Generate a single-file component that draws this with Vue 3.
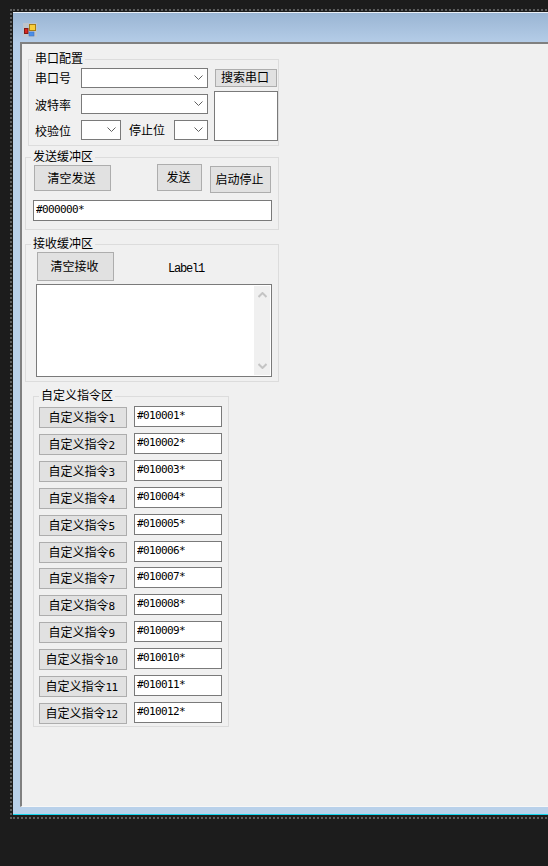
<script setup>
const cmds = [
  { n: 1, v: "#010001*" },
  { n: 2, v: "#010002*" },
  { n: 3, v: "#010003*" },
  { n: 4, v: "#010004*" },
  { n: 5, v: "#010005*" },
  { n: 6, v: "#010006*" },
  { n: 7, v: "#010007*" },
  { n: 8, v: "#010008*" },
  { n: 9, v: "#010009*" },
  { n: 10, v: "#010010*" },
  { n: 11, v: "#010011*" },
  { n: 12, v: "#010012*" },
];
</script>

<template>
  <div class="stage">
    <div class="frame">
      <div class="window">
        <div class="titlebar">
          <svg class="app-icon" width="14" height="14" viewBox="0 0 14 14">
            <rect x="0" y="0" width="14" height="14" fill="#c3c5c9" opacity="0.8" />
            <rect x="1.5" y="5.5" width="3.5" height="5" fill="#d8261f" stroke="#7f1a16" />
            <rect x="6.5" y="1.5" width="6" height="6" fill="#f8cd3a" stroke="#a87d12" />
            <rect x="6" y="9" width="5" height="4" fill="#4a8ee8" stroke="#3f74c4" stroke-width="0.6" />
          </svg>
        </div>
        <div class="client">
          <div class="group g-port">
            <span class="legend">串口配置</span>
            <div class="port-left">
              <div class="port-row">
                <span class="lbl up">串口号</span>
                <div class="combo w127">
                  <svg width="9" height="5" viewBox="0 0 9 5"><path d="M0.5 0.5L4.5 4.5L8.5 0.5" fill="none" stroke="#606060" /></svg>
                </div>
              </div>
              <div class="port-row">
                <span class="lbl">波特率</span>
                <div class="combo w127">
                  <svg width="9" height="5" viewBox="0 0 9 5"><path d="M0.5 0.5L4.5 4.5L8.5 0.5" fill="none" stroke="#606060" /></svg>
                </div>
              </div>
              <div class="port-row">
                <span class="lbl">校验位</span>
                <div class="combo w40">
                  <svg width="9" height="5" viewBox="0 0 9 5"><path d="M0.5 0.5L4.5 4.5L8.5 0.5" fill="none" stroke="#606060" /></svg>
                </div>
                <span class="lbl stop up">停止位</span>
                <div class="combo w34">
                  <svg width="9" height="5" viewBox="0 0 9 5"><path d="M0.5 0.5L4.5 4.5L8.5 0.5" fill="none" stroke="#606060" /></svg>
                </div>
              </div>
            </div>
            <div class="port-right">
              <button class="btn search">搜索串口</button>
              <div class="listbox"></div>
            </div>
          </div>

          <div class="group g-send">
            <span class="legend">发送缓冲区</span>
            <div class="send-btns">
              <button class="btn clear-send">清空发送</button>
              <button class="btn send">发送</button>
              <button class="btn start-stop">启动停止</button>
            </div>
            <input class="field send-field" value="#000000*" readonly />
          </div>

          <div class="group g-recv">
            <span class="legend">接收缓冲区</span>
            <div class="recv-top">
              <button class="btn clear-recv">清空接收</button>
              <span class="label1">Label1</span>
            </div>
            <div class="recv-box">
              <div class="scrollbar">
                <svg width="9" height="6" viewBox="0 0 9 6"><path d="M0.5 5L4.5 1L8.5 5" fill="none" stroke="#c4c4c4" stroke-width="2" /></svg>
                <svg width="9" height="6" viewBox="0 0 9 6"><path d="M0.5 1L4.5 5L8.5 1" fill="none" stroke="#c4c4c4" stroke-width="2" /></svg>
              </div>
            </div>
          </div>

          <div class="group g-cmd">
            <span class="legend">自定义指令区</span>
            <div v-for="c in cmds" :key="c.n" class="cmd-row" :class="{ tight: c.n === 7 }">
              <button class="btn cmd-btn">自定义指令<span class="num">{{ c.n }}</span></button>
              <input class="field cmd-field" :value="c.v" readonly />
            </div>
          </div>
        </div>
      </div>
    </div>
  </div>
</template>

<style>
html,
body {
  margin: 0;
  background: #1c1c1c;
  overflow: hidden;
}
</style>

<style scoped>
.stage {
  width: 548px;
  height: 866px;
  overflow: hidden;
  background: #1c1c1c;
  font-family: "Noto Sans CJK SC", "Liberation Sans", sans-serif;
  font-size: 12px;
  color: #000;
}

.frame {
  width: 640px;
  height: 805px;
  margin: 0 0 0 10px;
  position: relative;
  top: 9px;
  border: 2px dotted #5c5c5c;
  padding: 1px 0 0 1px;
  box-sizing: content-box;
}

.window {
  height: 803px;
  border-top: 1px solid #e8eef5;
  box-sizing: border-box;
  background: linear-gradient(#9ab5d3 0, #b5cde8 30px, #b9d1ea 120px);
  border-bottom: 1px solid #12d4ec;
}

.titlebar {
  height: 29px;
  padding: 10px 0 0 10px;
  box-sizing: border-box;
}

.app-icon {
  display: block;
}

.client {
  margin-left: 7px;
  height: 765px;
  box-sizing: border-box;
  border-left: 2px solid #808080;
  border-top: 2px solid #808080;
  border-bottom: 1px solid #f7f7f7;
  background: #f0f0f0;
  display: flex;
  flex-direction: column;
  align-items: flex-start;
}

.group {
  position: relative;
  border: 1px solid #dcdcdc;
  box-sizing: border-box;
}

.legend {
  position: absolute;
  top: -10px;
  line-height: 16px;
  padding: 0 2px;
  background: #f0f0f0;
  white-space: nowrap;
}

.btn {
  display: block;
  padding: 0 2px 2px 0;
  font: inherit;
  color: #000;
  background: #e1e1e1;
  border: 1px solid #adadad;
  box-sizing: border-box;
  white-space: nowrap;
}

.field {
  display: block;
  box-sizing: border-box;
  border: 1px solid #7a7a7a;
  background: #fff;
  padding: 0 0 3px 2px;
  outline: none;
  font-family: "DejaVu Sans Mono", monospace;
  font-size: 11px;
  letter-spacing: -0.62px;
  color: #000;
}

/* 串口配置 */
.g-port {
  display: flex;
  margin: 15px 0 0 6px;
  width: 251px;
  height: 87px;
}

.g-port .legend {
  left: 4px;
}

.port-left {
  padding: 8px 0 0 6px;
  width: 185px;
  box-sizing: border-box;
}

.port-row {
  display: flex;
  align-items: center;
  height: 20px;
  margin-bottom: 6px;
}

.lbl {
  width: 46px;
  flex: none;
}

.lbl.up {
  position: relative;
  top: -1px;
}

.lbl.stop {
  width: 45px;
  margin-left: 8px;
}

.combo {
  height: 20px;
  box-sizing: border-box;
  border: 1px solid #7a7a7a;
  background: #fff;
  display: flex;
  align-items: center;
  justify-content: flex-end;
  padding: 0 4px 1px 0;
  flex: none;
}

.w127 {
  width: 127px;
}

.w40 {
  width: 40px;
}

.w34 {
  width: 34px;
}

.port-right {
  padding-top: 9px;
}

.search {
  width: 62px;
  height: 18px;
  margin-left: 1px;
  line-height: 14px;
}

.listbox {
  width: 64px;
  height: 50px;
  margin-top: 4px;
  box-sizing: border-box;
  border: 1px solid #7a7a7a;
  background: #fff;
}

/* 发送缓冲区 */
.g-send {
  margin: 11px 0 0 3px;
  width: 254px;
  height: 73px;
}

.g-send .legend {
  left: 5px;
}

.send-btns {
  display: flex;
  align-items: flex-start;
  padding-left: 8px;
}

.clear-send {
  width: 77px;
  height: 26px;
  margin-top: 7px;
}

.send {
  width: 45px;
  height: 27px;
  margin: 6px 0 0 46px;
}

.start-stop {
  width: 61px;
  height: 27px;
  margin: 8px 0 0 8px;
}

.send-field {
  width: 239px;
  height: 21px;
  margin: 7px 0 0 7px;
}

/* 接收缓冲区 */
.g-recv {
  margin: 14px 0 0 3px;
  width: 254px;
  height: 138px;
}

.g-recv .legend {
  left: 5px;
}

.recv-top {
  display: flex;
  align-items: flex-start;
  padding-left: 11px;
}

.clear-recv {
  width: 77px;
  height: 29px;
  margin-top: 7px;
}

.label1 {
  margin: 17px 0 0 54px;
  font-family: "Liberation Mono", monospace;
  font-size: 12px;
  letter-spacing: -1.2px;
  line-height: 14px;
}

.recv-box {
  width: 236px;
  height: 93px;
  margin: 3px 0 0 10px;
  box-sizing: border-box;
  border: 1px solid #7a7a7a;
  background: #fff;
  padding: 1px;
  display: flex;
  justify-content: flex-end;
}

.scrollbar {
  width: 16px;
  background: #f0f0f0;
  display: flex;
  flex-direction: column;
  align-items: center;
  justify-content: space-between;
  padding: 6px 0;
  box-sizing: border-box;
}

.scrollbar svg {
  display: block;
}

/* 自定义指令区 */
.g-cmd {
  margin: 14px 0 0 11px;
  width: 196px;
  height: 331px;
  padding: 9px 0 0 5px;
}

.g-cmd .legend {
  left: 5px;
}

.cmd-row {
  display: flex;
  gap: 7px;
  margin-bottom: 5px;
}

.cmd-row.tight {
  margin-top: -1px;
}

.cmd-btn {
  width: 88px;
  height: 21px;
  margin-top: 1px;
  padding-right: 3px;
}

.num {
  font-family: "DejaVu Sans Mono", monospace;
  font-size: 11px;
  letter-spacing: -0.62px;
}

.cmd-field {
  width: 88px;
  height: 21px;
}
</style>
